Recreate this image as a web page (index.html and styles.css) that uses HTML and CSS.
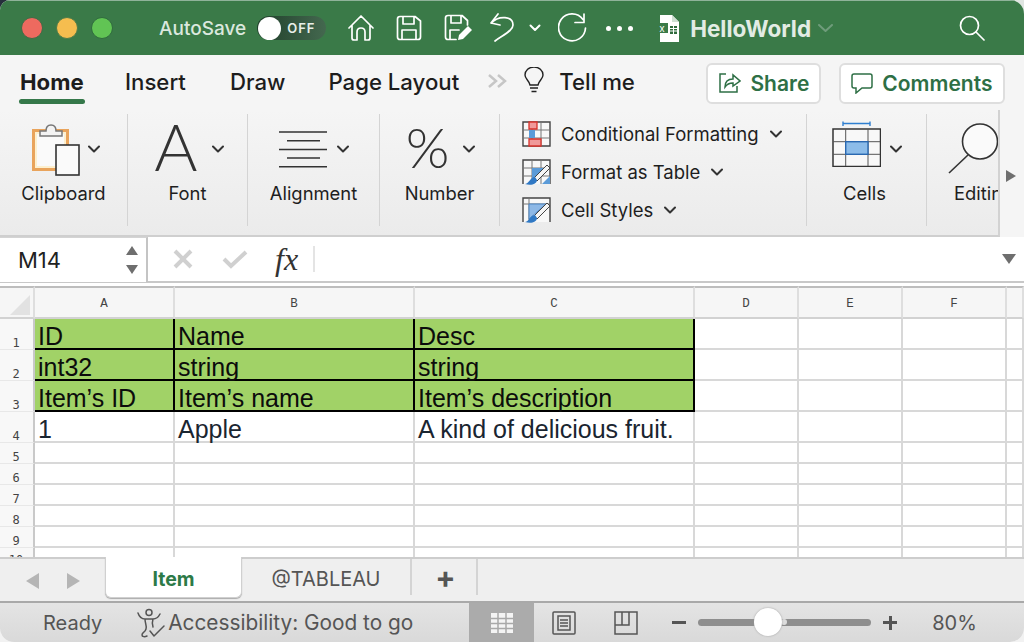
FILE: index.html
```html
<!DOCTYPE html>
<html lang="en">
<head>
  <meta charset="UTF-8" />
  <title>HelloWorld</title>
  <link rel="stylesheet" href="styles.css">
</head>
<body>
<div class="window">

  <header class="titlebar">
    <span class="light red"></span>
    <span class="light yellow"></span>
    <span class="light green"></span>
    <span class="autosave">AutoSave</span>
    <span class="toggle"><span class="knob"></span><span class="off">OFF</span></span>
    <svg class="tb home" width="26" height="28" viewBox="0 0 26 28"><path d="M1 14 L13 2 L25 14 M4 11 V24 Q4 26 6 26 H9 V18 Q9 14 13 14 Q17 14 17 18 V26 H20 Q22 26 22 24 V11"/></svg>
    <svg class="tb save" width="26" height="26" viewBox="0 0 26 26"><path d="M4 1.5 H19 L24.5 6 V22 Q24.5 24.5 22 24.5 H4 Q1.5 24.5 1.5 22 V4 Q1.5 1.5 4 1.5 Z M7 1.5 V9 H18 V1.5 M6 24.5 V15 H20 V24.5"/></svg>
    <svg class="tb saveas" width="28" height="28" viewBox="0 0 28 28"><path d="M12 25.5 H4 Q1.5 25.5 1.5 23 V4 Q1.5 1.5 4 1.5 H18 L23.5 6.5 V11 M7 1.5 V9 H17 V1.5 M6 25.5 V16 H15"/><path class="solid" d="M14 26 L15 21 L24 12 L28 16 L19 25 Z"/></svg>
    <svg class="tb undo" width="27" height="30" viewBox="0 0 27 30"><path d="M9 1 L2 10 L11 12 M2 10 C10 2 24 3 24 12 C24 18 14 22 6 28"/></svg>
    <svg class="tb chev-w" width="12" height="8" viewBox="0 0 12 8"><path d="M1.5 1.5 L6 6 L10.5 1.5"/></svg>
    <svg class="tb redo" width="30" height="30" viewBox="0 0 30 30"><path d="M27.5 15 A13.5 13.5 0 1 1 25 6.500 M26 1 V9.500 H17"/></svg>
    <span class="dots"><i></i><i></i><i></i></span>
    <svg class="fileicon" width="22" height="27" viewBox="0 0 22 27"><path fill="#fff" d="M2 0 H14 L21 7 V27 H2 Z"/><path fill="#cfe0d3" d="M14 0 L21 7 H14 Z"/><rect x="0" y="8" width="10" height="10" fill="#3a7a48"/><text x="1.5" y="17" class="x">x</text><path fill="#2f6b3d" d="M12 11 h7 v8 h-7 z"/><path stroke="#fff" stroke-width="1" d="M12 13.500 h7 M12 16 h7 M15.500 11 v8"/></svg>
    <span class="docname">HelloWorld</span>
    <svg class="tb chev-d" width="15" height="9" viewBox="0 0 15 9"><path d="M1 1 L7.500 7 L14 1"/></svg>
    <svg class="tb search" width="26" height="26" viewBox="0 0 26 26"><circle cx="10.500" cy="10.500" r="9"/><path d="M17 17 L25 25"/></svg>
  </header>

  <nav class="tabbar">
    <span class="tab active">Home</span>
    <span class="tab t-insert">Insert</span>
    <span class="tab t-draw">Draw</span>
    <span class="tab t-layout">Page Layout</span>
    <svg class="more" width="20" height="14" viewBox="0 0 20 14"><path d="M1 1 L8 7 L1 13 M10 1 L17 7 L10 13"/></svg>
    <svg class="bulb" width="20" height="26" viewBox="0 0 20 26"><path d="M6 18 C5 13 1 12 1 8 A9 8 0 0 1 19 8 C19 12 15 13 14 18 Z M6 21 H14 M7.500 24.500 H12.500"/></svg>
    <span class="tab t-tell">Tell me</span>
    <span class="btn b-share">
      <svg width="24" height="22" viewBox="0 0 24 22"><path d="M9 2 H3 V20 H20 V14 M8 15 C8 9 12 7 16 7 V3 L23 9 L16 14 V11 C13 11 10 12 8 15 Z"/></svg>
      Share
    </span>
    <span class="btn b-comments">
      <svg width="22" height="22" viewBox="0 0 22 22"><path d="M3 2 H19 Q21 2 21 4 V14 Q21 16 19 16 H11 L5 21 V16 H3 Q1 16 1 14 V4 Q1 2 3 2 Z"/></svg>
      Comments
    </span>
  </nav>

  <section class="ribbon-wrap">
    <div class="ribbon">
      <div class="group g-clip">
        <div class="group-icon">
          <svg width="50" height="54" viewBox="0 0 50 54">
            <rect x="1.500" y="8.500" width="34" height="39" fill="#fdf0cf" stroke="#e9a45c" stroke-width="3"/>
            <rect x="5" y="12" width="27" height="32" fill="#fafafa"/>
            <path d="M8 14 V9 H14 Q14 3 19 3 Q24 3 24 9 H30 V14 Z" fill="#f3f3f3" stroke="#777" stroke-width="1.500"/>
            <rect x="24" y="23" width="23" height="30" fill="#fafafa" stroke="#333" stroke-width="1.600"/>
          </svg>
          <svg class="chev" width="12" height="8" viewBox="0 0 12 8"><path d="M1 1.500 L6 6.500 L11 1.500"/></svg>
        </div>
        <div class="group-label">Clipboard</div>
      </div>
      <div class="group g-font">
        <div class="group-icon">
          <span class="big-a">A</span>
          <svg class="chev" width="12" height="8" viewBox="0 0 12 8"><path d="M1 1.500 L6 6.500 L11 1.500"/></svg>
        </div>
        <div class="group-label">Font</div>
      </div>
      <div class="group g-align">
        <div class="group-icon">
          <svg width="50" height="37" viewBox="0 0 50 37"><path class="lines" d="M1 1 H49 M9 9.700 H42 M1 18.400 H49 M9 27.100 H42 M1 35.800 H49"/></svg>
          <svg class="chev" width="12" height="8" viewBox="0 0 12 8"><path d="M1 1.500 L6 6.500 L11 1.500"/></svg>
        </div>
        <div class="group-label">Alignment</div>
      </div>
      <div class="group g-num">
        <div class="group-icon">
          <span class="big-pct">%</span>
          <svg class="chev" width="12" height="8" viewBox="0 0 12 8"><path d="M1 1.500 L6 6.500 L11 1.500"/></svg>
        </div>
        <div class="group-label">Number</div>
      </div>
      <div class="group g-styles">
        <div class="style-row">
          <svg width="30" height="26" viewBox="0 0 30 26"><path fill="#f8f8f8" stroke="#444" stroke-width="1.400" d="M1 1 H28 V25 H1 Z"/><path stroke="#777" fill="none" d="M1 9 H28 M1 17 H28 M10 1 V25 M19 1 V25"/><path fill="#f09a9a" stroke="#d8332c" stroke-width="1.300" d="M7 1 H15 V8 H7 Z M7 18 H19 V25 H7 Z"/><path fill="#5b9bd8" d="M7 9 H13 V17 H7 Z"/></svg>
          <span>Conditional Formatting</span>
          <svg class="chev" width="12" height="8" viewBox="0 0 12 8"><path d="M1 1.500 L6 6.500 L11 1.500"/></svg>
        </div>
        <div class="style-row">
          <svg width="30" height="26" viewBox="0 0 30 26"><path fill="#f8f8f8" stroke="#444" stroke-width="1.400" d="M1 25 V1 H28 V25"/><path stroke="#777" fill="none" d="M1 9 H28 M1 17 H28 M10 1 V25 M19 1 V25"/><path fill="#5b9bd8" d="M10 9 H22 L10 21 Z M20 25 L28 17 V25 Z"/><path fill="#f5f5f5" stroke="#444" d="M12 19 L25 6 L28 9 L15 22 Z"/><path fill="#2f78c4" d="M13 18 C8 18 8 24 3 25 C9 27 15 25 15 21 Z"/></svg>
          <span>Format as Table</span>
          <svg class="chev" width="12" height="8" viewBox="0 0 12 8"><path d="M1 1.500 L6 6.500 L11 1.500"/></svg>
        </div>
        <div class="style-row">
          <svg width="30" height="26" viewBox="0 0 30 26"><path fill="#f8f8f8" stroke="#444" stroke-width="1.400" d="M1 25 V1 H28 V25"/><path stroke="#777" fill="none" d="M1 7 H28 M7 1 V25"/><path fill="#8db8e6" stroke="#4d86c4" d="M7 7 H24 L7 22 Z"/><path fill="#f5f5f5" stroke="#444" d="M12 19 L25 6 L28 9 L15 22 Z"/><path fill="#2f78c4" d="M13 18 C8 18 8 24 3 25 C9 27 15 25 15 21 Z"/></svg>
          <span>Cell Styles</span>
          <svg class="chev" width="12" height="8" viewBox="0 0 12 8"><path d="M1 1.500 L6 6.500 L11 1.500"/></svg>
        </div>
      </div>
      <div class="group g-cells">
        <div class="group-icon">
          <svg class="cells-icon" width="50" height="46" viewBox="0 0 50 46">
            <path stroke="#2f7fd0" stroke-width="1.400" fill="none" d="M12 0.500 V5 M39 0.500 V5 M12 2.500 H39"/>
            <rect x="2" y="8" width="47.500" height="37.500" fill="#f8f8f8" stroke="#333" stroke-width="1.500"/>
            <path stroke="#555" fill="none" d="M2 20.700 H49 M2 33.300 H49 M14.700 8 V45 M37 8 V45"/>
            <rect x="14.700" y="20.700" width="22.300" height="12.600" fill="#8cbce9" stroke="#2a68b0" stroke-width="1.400"/>
          </svg>
          <svg class="chev" width="12" height="8" viewBox="0 0 12 8"><path d="M1 1.500 L6 6.500 L11 1.500"/></svg>
        </div>
        <div class="group-label">Cells</div>
      </div>
      <div class="group g-edit">
        <div class="group-icon">
          <svg width="52" height="52" viewBox="0 0 52 52"><circle cx="33" cy="18.500" r="17.500" fill="#fafafa" stroke="#333" stroke-width="1.600"/><path stroke="#333" stroke-width="1.600" d="M21 32 L2 50"/></svg>
        </div>
        <div class="group-label">Editing</div>
      </div>
    </div>
    <div class="ribbon-end"><span class="arrow-r"></span></div>
  </section>

  <section class="formulabar">
    <div class="namebox">
      <span>M14</span>
      <span class="spin"><i class="up"></i><i class="down"></i></span>
    </div>
    <svg class="f-x" width="20" height="20" viewBox="0 0 20 20"><path d="M2 2 L18 18 M18 2 L2 18"/></svg>
    <svg class="f-ok" width="26" height="20" viewBox="0 0 26 20"><path d="M2 10 L9 17 L24 3"/></svg>
    <span class="fx">fx</span>
    <span class="f-sep"></span>
    <span class="f-drop"></span>
  </section>

  <main class="sheet">
    <table class="grid">
      <thead>
        <tr><th class="corner"><span class="tri"></span></th><th class="c-a">A</th><th class="c-b">B</th><th class="c-c">C</th><th class="c-d">D</th><th class="c-e">E</th><th class="c-f">F</th><th class="c-g"></th></tr>
      </thead>
      <tbody>
        <tr class="tall head"><th>1</th><td class="fill">ID</td><td class="fill">Name</td><td class="fill">Desc</td><td></td><td></td><td></td><td></td></tr>
        <tr class="tall head"><th>2</th><td class="fill">int32</td><td class="fill">string</td><td class="fill">string</td><td></td><td></td><td></td><td></td></tr>
        <tr class="tall head"><th>3</th><td class="fill">Item’s ID</td><td class="fill">Item’s name</td><td class="fill">Item’s description</td><td></td><td></td><td></td><td></td></tr>
        <tr class="tall"><th>4</th><td>1</td><td>Apple</td><td>A kind of delicious fruit.</td><td></td><td></td><td></td><td></td></tr>
        <tr><th>5</th><td></td><td></td><td></td><td></td><td></td><td></td><td></td></tr>
        <tr><th>6</th><td></td><td></td><td></td><td></td><td></td><td></td><td></td></tr>
        <tr><th>7</th><td></td><td></td><td></td><td></td><td></td><td></td><td></td></tr>
        <tr><th>8</th><td></td><td></td><td></td><td></td><td></td><td></td><td></td></tr>
        <tr><th>9</th><td></td><td></td><td></td><td></td><td></td><td></td><td></td></tr>
        <tr><th class="r10">10</th><td></td><td></td><td></td><td></td><td></td><td></td><td></td></tr>
      </tbody>
    </table>
  </main>

  <section class="sheetbar">
    <span class="nav-l"></span>
    <span class="nav-r"></span>
    <span class="sheet-tab current">Item</span>
    <span class="sheet-tab other">@TABLEAU</span>
    <span class="add">+</span>
  </section>

  <footer class="statusbar">
    <span class="ready">Ready</span>
    <svg class="a11y" width="30" height="30" viewBox="0 0 30 30"><circle cx="13" cy="4.500" r="3"/><path d="M2 5 C4 11 8 11 9 11 H17 C19 11 22 10 24 6 M9 11 C9 16 11 17 10 21 C9 25 6 24 6 27 C6 29 9 29 11 28 M17 11 C16 14 16 16 17 19 M14 23 L18 28 L28 18"/></svg>
    <span class="a11y-text">Accessibility: Good to go</span>
    <span class="view active">
      <svg width="24" height="22" viewBox="0 0 24 22"><path fill="#f4f4f4" d="M1 1 H23 V21 H1 Z"/><path stroke="#a9a9a9" stroke-width="1.500" d="M1 6.500 H23 M1 11.500 H23 M1 16.500 H23 M8 1 V21 M16 1 V21"/></svg>
    </span>
    <svg class="view2" width="24" height="24" viewBox="0 0 24 24"><rect x="1" y="1" width="22" height="22" rx="1"/><rect x="6" y="5" width="12" height="14"/><path d="M8 9 H16 M8 12 H16 M8 15 H16"/></svg>
    <svg class="view3" width="24" height="24" viewBox="0 0 24 24"><path d="M1 1 H23 V23 H1 Z M1 14 H15 V1 M8 1 V14"/></svg>
    <span class="zoom-minus"></span>
    <span class="slider"><span class="tick"></span><span class="thumb"></span></span>
    <span class="zoom-plus"></span>
    <span class="zoom-val">80%</span>
  </footer>

</div>
</body>
</html>
```

FILE: styles.css
```css
* { box-sizing: border-box; }
html, body { margin: 0; padding: 0; }
html { background: linear-gradient(90deg, #26303c 50%, #dfe5e1 50%) top / 100% 50% no-repeat, #f2f2f2; }
body { font-family: Inter, "Noto Sans", sans-serif; }
svg { display: block; flex: none; }
.window { width: 1024px; height: 642px; display: flex; flex-direction: column; overflow: hidden; border-radius: 10px 14px 14px 14px; background: #fff; }

/* title bar */
.titlebar { height: 55px; flex: none; background: #3a7a48; border-top: 1px solid #8fb39a; display: flex; align-items: center; color: #fff; }
.light { width: 22px; height: 22px; border-radius: 50%; margin-right: 13px; }
.light.red { background: #ee6a5f; border: 1px solid #3f6b45; margin-left: 21px; }
.light.yellow { background: #f5bd4f; border: 1px solid #4f7b48; }
.light.green { background: #61c454; border: 1px solid #2f6b3d; }
.autosave { margin-left: 33px; font-size: 19px; font-weight: 500; color: #dbe8de; }
.toggle { margin-left: 11px; width: 69px; height: 24px; border-radius: 12px; background: linear-gradient(90deg, #1f3f2a, #44684f); display: flex; align-items: center; }
.knob { width: 23px; height: 23px; border-radius: 50%; background: #fff; margin-left: 1px; }
.off { font-size: 13px; font-weight: 600; letter-spacing: 1px; margin-left: 6px; color: #e8efe9; }
.tb { fill: none; stroke: #fff; stroke-width: 1.700; stroke-linecap: round; stroke-linejoin: round; }
.tb .solid { fill: #fff; stroke: none; }
.home { margin-left: 22px; }
.save { margin-left: 22px; }
.saveas { margin-left: 22px; }
.undo { margin-left: 17px; }
.chev-w { margin-left: 13px; stroke-width: 2; }
.redo { margin-left: 17px; }
.dots { margin-left: 18px; display: flex; gap: 6px; }
.dots i { width: 5px; height: 5px; border-radius: 50%; background: #fff; }
.fileicon { margin-left: 25px; }
.x { font-size: 10px; fill: #fff; font-family: "Liberation Sans", sans-serif; }
.docname { margin-left: 10px; font-size: 22.500px; font-weight: 700; color: #e2ece4; }
.chev-d { margin-left: 7px; stroke: #6f9c7b; stroke-width: 2; }
.search { margin-left: 126px; }

/* tabs */
.tabbar { height: 55px; flex: none; background: #f5f5f5; display: flex; align-items: center; padding-left: 20px; }
.tab { font-size: 22.200px; font-weight: 500; color: #1d1d1d; margin-top: -3px; }
.tab.active { font-weight: 700; position: relative; width: 64px; white-space: nowrap; }
.tab.active::after { content: ""; position: absolute; left: -1px; right: -1px; bottom: -9px; height: 5px; border-radius: 3px; background: #35784a; }
.t-insert { margin-left: 41px; }
.t-draw { margin-left: 44px; }
.t-layout { margin-left: 43px; }
.more { margin-left: 29px; margin-top: -3px; fill: none; stroke: #c6c6c6; stroke-width: 2.500; }
.bulb { margin-left: 16px; margin-top: -5px; fill: none; stroke: #222; stroke-width: 1.400; }
.t-tell { margin-left: 15px; }
.btn { height: 41px; border: 2px solid #dedede; border-radius: 6px; background: #fff; display: flex; align-items: center; justify-content: center; gap: 9px; font-size: 21px; font-weight: 600; color: #2e6f45; margin-top: 1px; }
.btn svg { fill: none; stroke: #2e6f45; stroke-width: 1.500; }
.b-share { width: 115px; margin-left: 71px; }
.b-comments { width: 166px; margin-left: 18px; }

/* ribbon */
.ribbon-wrap { height: 127px; flex: none; display: flex; background: #f5f5f5; }
.ribbon { width: 1000px; display: flex; overflow: hidden; background: linear-gradient(#f5f5f5, #ebebeb); border-right: 2px solid #d2d2d2; border-bottom: 2px solid #cfcfcf; }
.ribbon-end { flex: 1; display: flex; padding-left: 6px; padding-top: 60px; }
.arrow-r { width: 0; height: 0; border-left: 10px solid #6f6f6f; border-top: 6px solid transparent; border-bottom: 6px solid transparent; }
.group { flex: none; height: 112px; margin-top: 4px; border-right: 1px solid #d4d4d4; display: flex; flex-direction: column; align-items: center; }
.g-clip { width: 128px; }
.g-font { width: 120px; }
.g-align { width: 132px; }
.g-num { width: 120px; }
.g-styles { width: 307px; align-items: flex-start; padding: 7px 0 0 22px; gap: 12px; }
.g-cells { width: 120px; }
.g-edit { width: 73px; border-right: 0; align-items: flex-start; padding-left: 27px; }
.group-icon { height: 70px; display: flex; align-items: center; gap: 9px; }
.g-clip .group-icon { gap: 6px; margin-left: 4px; }
.g-font .group-icon { gap: 14px; margin-left: 3px; }
.g-num .group-icon { gap: 14px; margin-left: 2px; }
.g-edit .group-icon svg { margin-left: -7px; }
.group-label { font-size: 18.400px; line-height: 20px; color: #1e1e1e; white-space: nowrap; margin-top: -1px; }
.g-cells .group-label { margin-left: -4px; }
.chev { fill: none; stroke: #333; stroke-width: 2; stroke-linecap: round; stroke-linejoin: round; }
.big-a { font-family: Lato, sans-serif; font-weight: 300; font-size: 66px; line-height: 70px; color: #333; margin-top: -6px; }
.big-pct { font-family: Lato, sans-serif; font-weight: 300; font-size: 56px; line-height: 70px; color: #333; margin-top: -4px; }
.lines { fill: none; stroke: #333; stroke-width: 1.500; }
.cells-icon { margin-top: -10px; }
.style-row { display: flex; align-items: center; height: 26px; font-size: 18.500px; color: #1e1e1e; white-space: nowrap; }
.style-row span { margin-left: 9px; margin-right: 11px; }

/* formula bar */
.formulabar { height: 46px; flex: none; background: #fff; display: flex; align-items: center; border-bottom: 2px solid #c8c8c8; }
.namebox { width: 148px; height: 45px; background: #fff; border-right: 2px solid #c4c4c4; border-top: 1px solid #d4d4d4; display: flex; align-items: center; justify-content: space-between; padding: 0 8px 0 18px; font-size: 22px; color: #222; }
.spin { display: flex; flex-direction: column; gap: 10px; }
.spin i { display: block; width: 0; height: 0; border-left: 6px solid transparent; border-right: 6px solid transparent; }
.spin .up { border-bottom: 9px solid #6e6e6e; }
.spin .down { border-top: 9px solid #6e6e6e; }
.f-x { margin-left: 25px; fill: none; stroke: #d0d0d0; stroke-width: 4; }
.f-ok { margin-left: 29px; fill: none; stroke: #d0d0d0; stroke-width: 4; }
.fx { margin-left: 27px; width: 26px; font-family: "Liberation Serif", serif; font-style: italic; font-size: 32px; color: #333; }
.f-sep { width: 2px; height: 26px; margin-left: 12px; background: #e4e4e4; }
.f-drop { margin-left: auto; margin-right: 8px; width: 0; height: 0; border-left: 7px solid transparent; border-right: 7px solid transparent; border-top: 10px solid #6e6e6e; }

/* sheet */
.sheet { flex: none; height: 276px; overflow: hidden; background: #fff; padding-top: 3px; }
.grid { table-layout: fixed; border-collapse: separate; border-spacing: 0; width: 1024px; }
.grid thead th { height: 33px; background: #f6f6f6; border-right: 2px solid #dedede; border-bottom: 2px solid #d2d2d2; border-top: 2px solid #bdbdbd; font-family: "Liberation Mono", monospace; font-weight: 400; font-size: 12.500px; color: #444; padding: 3px 0 0; }
.corner { width: 35px; position: relative; }
.tri { position: absolute; left: 10px; top: 7px; width: 20px; height: 20px; background: #e2e2e2; clip-path: polygon(100% 0, 100% 100%, 0 100%); }
.c-a { width: 140px; }
.c-b { width: 240px; }
.c-c { width: 280px; }
.c-d { width: 104px; }
.c-e { width: 104px; }
.c-f { width: 104px; }
.grid tbody th { width: 35px; height: 21px; background: #f8f8f8; border-right: 2px solid #c9c9c9; border-bottom: 1px solid #e8e8e8; font-family: "DejaVu Sans Mono", monospace; font-weight: 400; font-size: 12px; line-height: 12px; color: #444; padding: 0 1px 0 0; text-align: center; vertical-align: bottom; }
.grid tbody th.r10 { vertical-align: top; padding-top: 5px; line-height: 14px; }
.grid td { height: 21px; border-right: 2px solid #d8d8d8; border-bottom: 2px solid #d8d8d8; padding: 0 0 0 3px; font-family: "Liberation Sans", sans-serif; font-size: 25px; line-height: 23px; color: #1a2530; white-space: nowrap; vertical-align: bottom; }
.grid .tall th, .grid .tall td { height: 31px; }
.grid td.fill { background: #a1d267; color: #0c0c0c; border-right: 2px solid #000; border-bottom: 2px solid #000; }

/* sheet tabs */
.sheetbar { height: 46px; flex: none; margin-top: -2px; background: #efefef; border-top: 2px solid #cdcdcd; border-bottom: 2px solid #a9a9a9; display: flex; align-items: flex-start; position: relative; }
.nav-l, .nav-r { width: 0; height: 0; margin-top: 14px; border-top: 8px solid transparent; border-bottom: 8px solid transparent; }
.nav-l { margin-left: 26px; border-right: 13px solid #b5b5b5; }
.nav-r { margin-left: 28px; border-left: 13px solid #b5b5b5; }
.sheet-tab { display: flex; align-items: center; justify-content: center; font-size: 20px; padding-top: 3px; }
.current { width: 137px; margin-left: 25px; margin-top: -2px; height: 41px; background: #fff; color: #2d7a47; font-weight: 700; border-radius: 0 0 6px 6px; border: 1px solid #d0d0d0; border-top: 0; box-shadow: 0 1px 1px #aaa; font-size: 19.500px; }
.other { width: 170px; color: #555; border-right: 2px solid #d4d4d4; height: 36px; }
.add { width: 66px; height: 36px; border-right: 2px solid #d4d4d4; display: flex; align-items: center; justify-content: center; font-size: 30px; font-weight: 700; color: #555; padding-left: 3px; }

/* status bar */
.statusbar { flex: 1; background: linear-gradient(#e4e4e4, #d9d9d9); display: flex; align-items: center; font-size: 20px; color: #555; }
.ready { margin-left: 43px; }
.a11y { margin-left: 34px; fill: none; stroke: #555; stroke-width: 1.500; stroke-linecap: round; stroke-linejoin: round; }
.a11y-text { margin-left: 2px; font-size: 20.800px; }
.view { display: flex; align-items: center; justify-content: center; width: 65px; height: 100%; background: #ababab; margin-left: 56px; }
.view2 { margin-left: 18px; fill: none; stroke: #555; stroke-width: 1.500; }
.view3 { margin-left: 38px; fill: none; stroke: #555; stroke-width: 1.500; }
.zoom-minus { width: 14px; height: 3px; background: #555; margin-left: 34px; }
.slider { width: 173px; height: 7px; border-radius: 4px; background: #8e8e8e; margin-left: 12px; position: relative; }
.thumb { position: absolute; left: 56px; top: -11px; width: 28px; height: 28px; border-radius: 50%; background: #fff; box-shadow: 0 0 2px #999; }
.tick { position: absolute; left: 83px; top: 0; width: 6px; height: 6px; border-radius: 50%; background: #ddd; }
.zoom-plus { width: 14px; height: 14px; margin-left: 12px; background: linear-gradient(#555, #555) center / 100% 3px no-repeat, linear-gradient(#555, #555) center / 3px 100% no-repeat; }
.zoom-val { margin-left: 35px; font-size: 20px; }
```
